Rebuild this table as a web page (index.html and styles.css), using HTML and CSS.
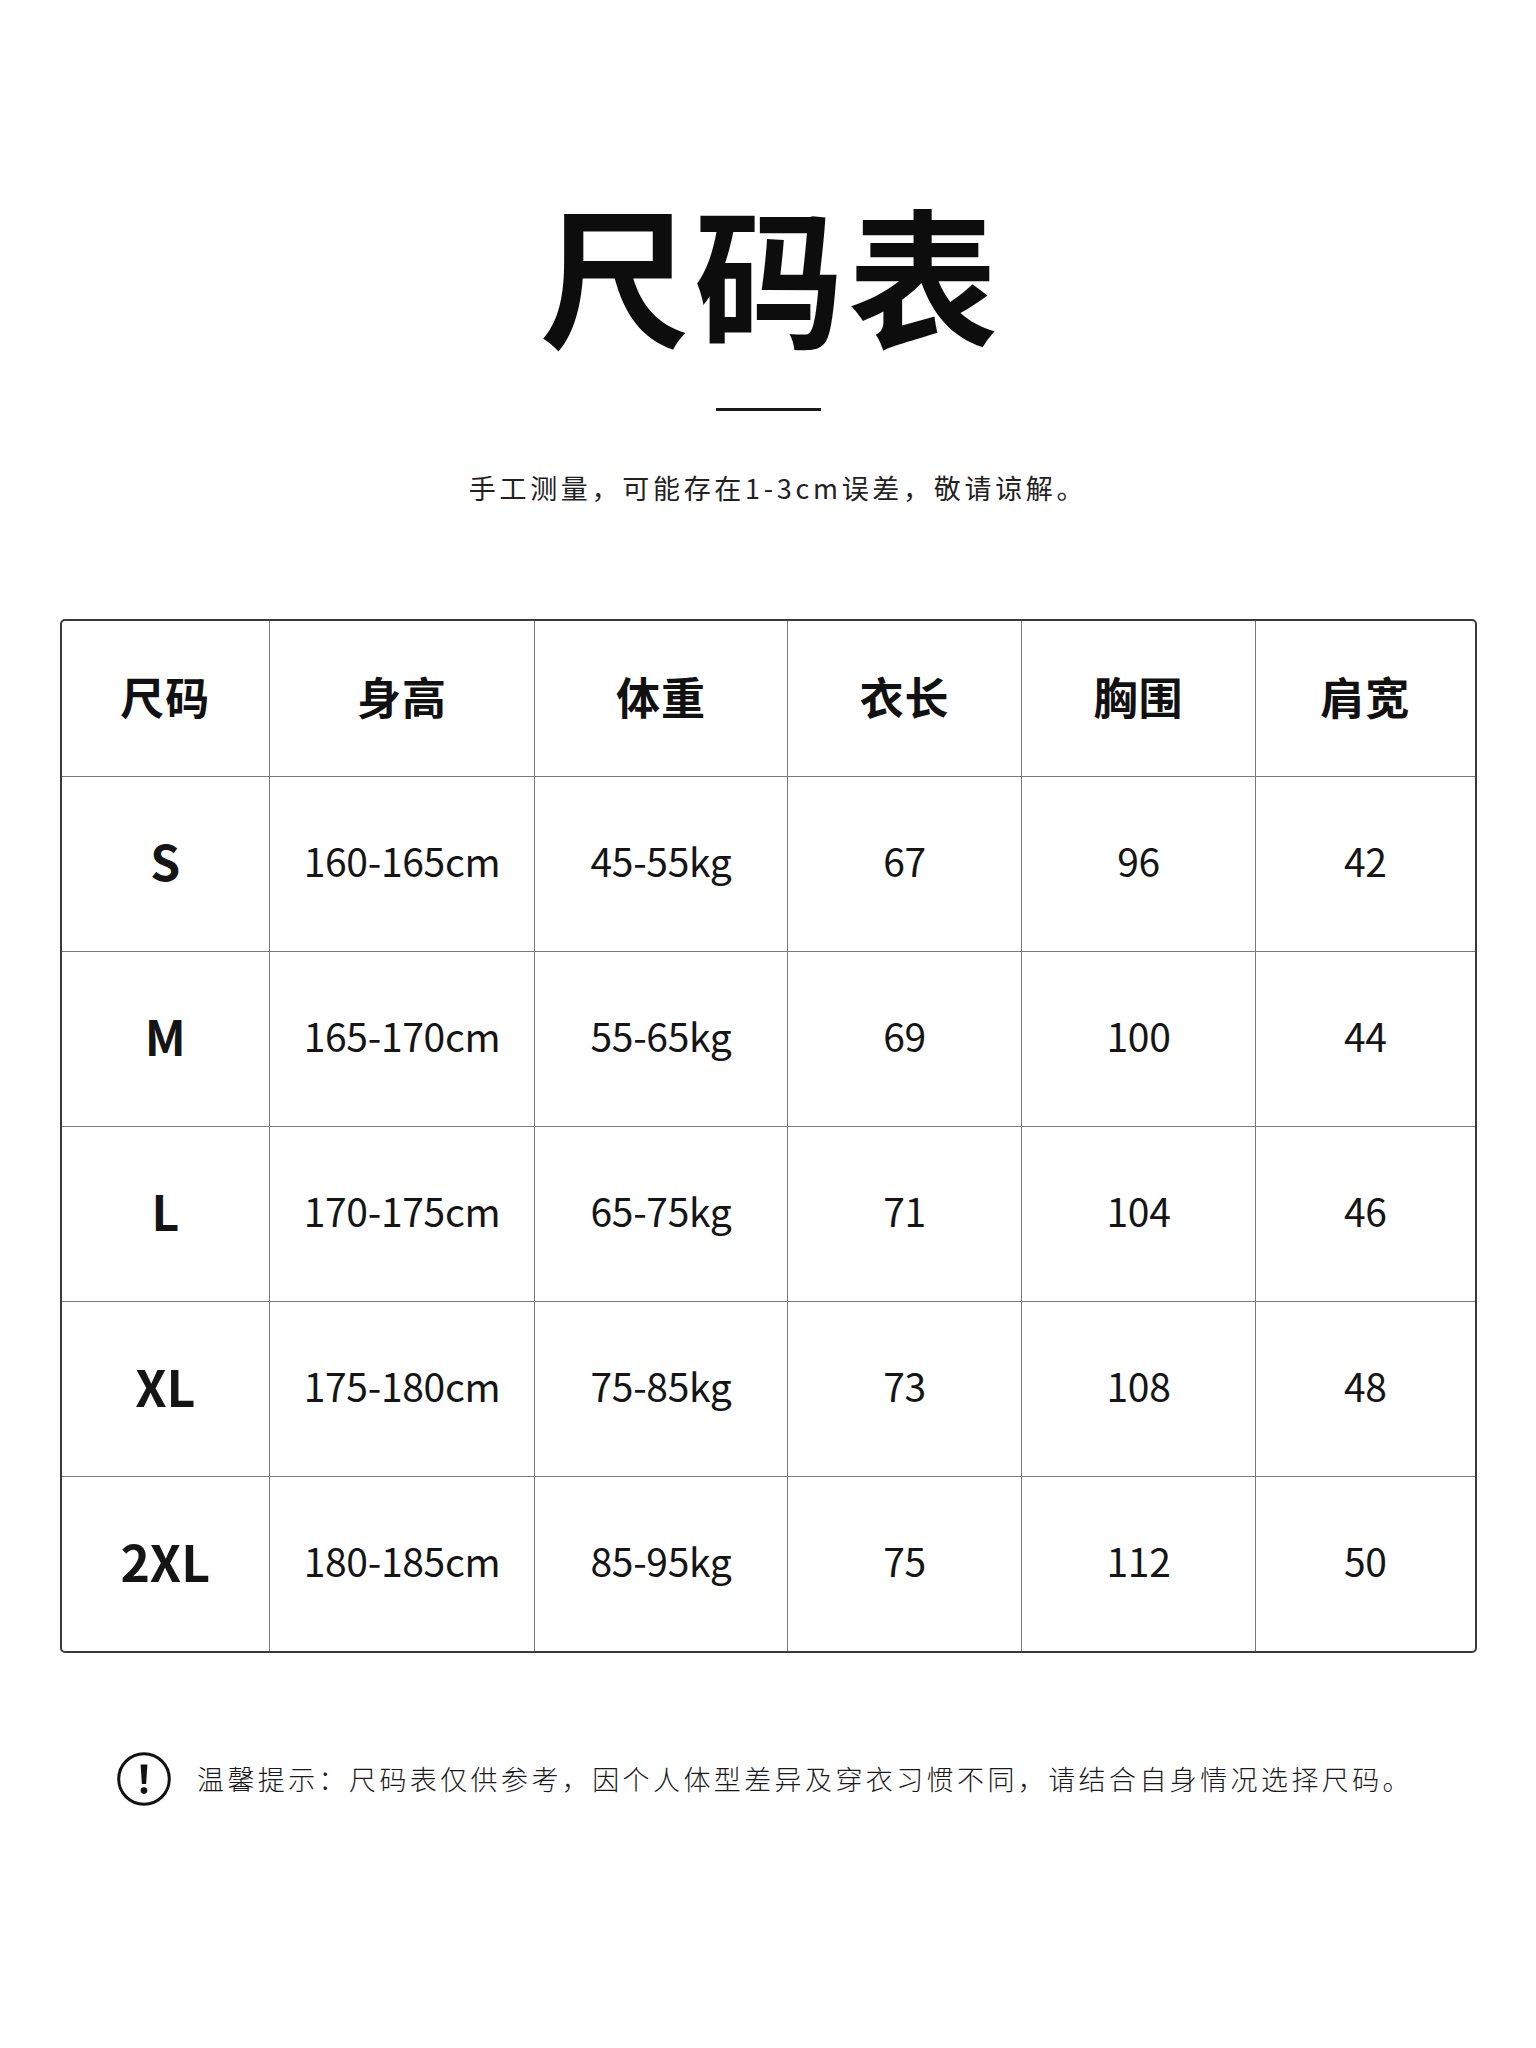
FILE: index.html
```html
<!DOCTYPE html>
<html lang="zh-CN">
<head>
<meta charset="utf-8">
<title>尺码表</title>
<link rel="stylesheet" href="styles.css">
</head>
<body>
<main class="page">
  <h1 class="title">尺码表</h1>
  <div class="rule"></div>
  <p class="subtitle">手工测量，可能存在1-3cm误差，敬请谅解。</p>

  <div class="table-wrap">
    <table class="sizes">
      <colgroup>
        <col class="c1"><col class="c2"><col class="c3"><col class="c4"><col class="c5"><col class="c6">
      </colgroup>
      <thead>
        <tr><th>尺码</th><th>身高</th><th>体重</th><th>衣长</th><th>胸围</th><th>肩宽</th></tr>
      </thead>
      <tbody>
        <tr><td class="size">S</td><td>160-165cm</td><td>45-55kg</td><td>67</td><td>96</td><td>42</td></tr>
        <tr><td class="size">M</td><td>165-170cm</td><td>55-65kg</td><td>69</td><td>100</td><td>44</td></tr>
        <tr><td class="size">L</td><td>170-175cm</td><td>65-75kg</td><td>71</td><td>104</td><td>46</td></tr>
        <tr><td class="size big">XL</td><td>175-180cm</td><td>75-85kg</td><td>73</td><td>108</td><td>48</td></tr>
        <tr><td class="size big">2XL</td><td>180-185cm</td><td>85-95kg</td><td>75</td><td>112</td><td>50</td></tr>
      </tbody>
    </table>
  </div>

  <div class="note">
    <svg class="note-icon" viewBox="0 0 54 54" width="54" height="54" aria-hidden="true">
      <circle cx="27" cy="27" r="25.3" fill="none" stroke="#111" stroke-width="3"/>
      <path d="M23.6 12.5 h6.8 l-1.3 19.5 h-4.2 z" fill="#111"/>
      <circle cx="27" cy="38.6" r="3.3" fill="#111"/>
    </svg>
    <p class="note-text">温馨提示：尺码表仅供参考，因个人体型差异及穿衣习惯不同，请结合自身情况选择尺码。</p>
  </div>
</main>
</body>
</html>
```

FILE: styles.css
```css
html, body {
  margin: 0;
  padding: 0;
  background: #ffffff;
}

body {
  font-family: "Noto Sans CJK SC", "Noto Sans", sans-serif;
  color: #111;
}

.page {
  width: 1536px;
  padding-top: 197px;
  display: flex;
  flex-direction: column;
  align-items: center;
}

.title {
  margin: 0;
  font-size: 150px;
  line-height: 150px;
  height: 150px;
  font-weight: 700;
  letter-spacing: 4px;
  color: #0d0d0d;
  padding-left: 6px;
}

.rule {
  width: 105px;
  height: 3px;
  background: #1a1a1a;
  margin-top: 61px;
}

.subtitle {
  margin: 57px 0 0 0;
  padding-left: 20px;
  font-size: 27px;
  line-height: 40px;
  letter-spacing: 3.7px;
  color: #222;
  font-weight: 400;
}

.table-wrap {
  margin-top: 111px;
  width: 1417px;
  box-sizing: border-box;
  border: 2px solid #3a3a3a;
  border-radius: 5px;
  overflow: hidden;
}

.sizes {
  width: 100%;
  border-collapse: collapse;
  table-layout: fixed;
}

.c1 { width: 208px; }
.c2 { width: 265px; }
.c3 { width: 253px; }
.c4 { width: 234px; }
.c5 { width: 234px; }
.c6 { width: auto; }

.sizes th,
.sizes td {
  padding: 0;
  text-align: center;
  vertical-align: middle;
  border-right: 1.5px solid #7a7a7a;
  border-bottom: 1.5px solid #7a7a7a;
}

.sizes th:last-child,
.sizes td:last-child {
  border-right: none;
}

.sizes tbody tr:last-child td {
  border-bottom: none;
}

.sizes th {
  height: 149px;
  padding-bottom: 6px;
  font-size: 44px;
  font-weight: 700;
  letter-spacing: 1px;
  color: #111;
}

.sizes td {
  height: 166px;
  padding-bottom: 8px;
  font-size: 39px;
  font-weight: 400;
  letter-spacing: -0.3px;
  color: #151515;
}

.sizes td.size {
  font-size: 48px;
  font-weight: 700;
  letter-spacing: 0;
}

.sizes td.size.big {
  font-size: 50px;
}

.note {
  align-self: flex-start;
  margin: 99px 0 0 117px;
  display: flex;
  align-items: center;
  gap: 26px;
}

.note-icon {
  display: block;
  flex: none;
}

.note-text {
  margin: 0;
  font-size: 27px;
  line-height: 40px;
  letter-spacing: 3.4px;
  font-weight: 300;
  color: #1a1a1a;
}
```
